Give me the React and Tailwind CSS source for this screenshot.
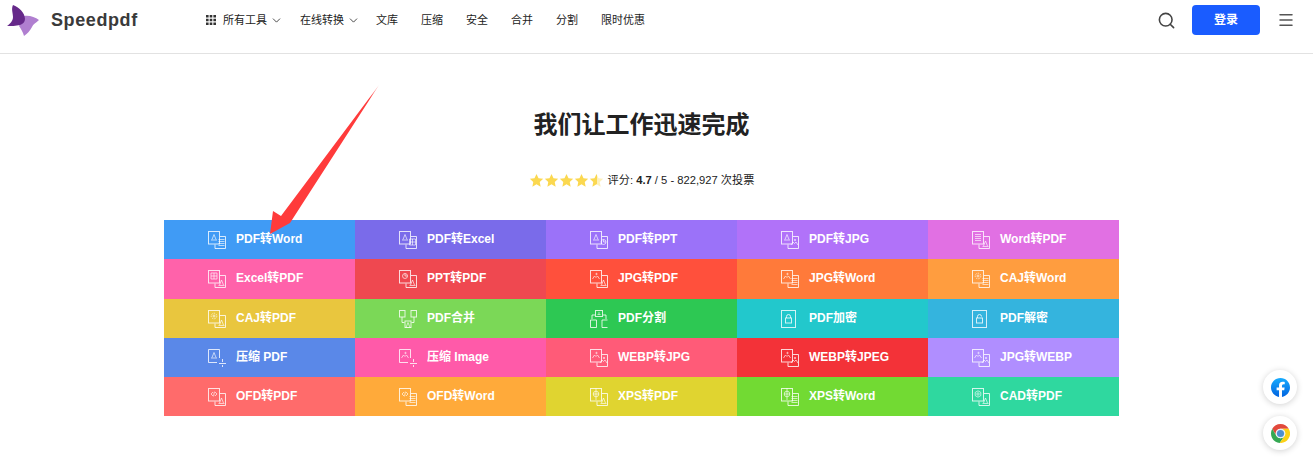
import { ChevronDown, Search, Menu } from 'lucide-react';

const FONT = "font-['Liberation_Sans','Noto_Sans_CJK_SC',sans-serif]";

const navLinks = [
  { label: '文库', w: 'w-[45px]' },
  { label: '压缩', w: 'w-[45px]' },
  { label: '安全', w: 'w-[45px]' },
  { label: '合并', w: 'w-[45px]' },
  { label: '分割', w: 'w-[45px]' },
  { label: '限时优惠', w: 'w-[44px]' },
];

const tools = [
  { label: 'PDF转Word', bg: 'bg-[#409bf5]', icon: ['pdf', 'word'] },
  { label: 'PDF转Excel', bg: 'bg-[#7a6bea]', icon: ['pdf', 'excel'] },
  { label: 'PDF转PPT', bg: 'bg-[#9b72f9]', icon: ['pdf', 'ppt'] },
  { label: 'PDF转JPG', bg: 'bg-[#b172f9]', icon: ['pdf', 'jpg'] },
  { label: 'Word转PDF', bg: 'bg-[#e170e3]', icon: ['word', 'pdf'] },
  { label: 'Excel转PDF', bg: 'bg-[#ff62aa]', icon: ['excel', 'pdf'] },
  { label: 'PPT转PDF', bg: 'bg-[#ef4850]', icon: ['ppt', 'pdf'] },
  { label: 'JPG转PDF', bg: 'bg-[#ff503c]', icon: ['jpg', 'pdf'] },
  { label: 'JPG转Word', bg: 'bg-[#ff7a3a]', icon: ['jpg', 'word'] },
  { label: 'CAJ转Word', bg: 'bg-[#ff9d3f]', icon: ['caj', 'word'] },
  { label: 'CAJ转PDF', bg: 'bg-[#e9c63e]', icon: ['caj', 'pdf'] },
  { label: 'PDF合并', bg: 'bg-[#7bd857]', special: 'merge' },
  { label: 'PDF分割', bg: 'bg-[#2dc853]', special: 'split' },
  { label: 'PDF加密', bg: 'bg-[#22c8cc]', special: 'lock' },
  { label: 'PDF解密', bg: 'bg-[#34b4de]', special: 'unlock' },
  { label: '压缩 PDF', bg: 'bg-[#5a88e8]', special: 'compress', glyph: 'pdf' },
  { label: '压缩 Image', bg: 'bg-[#ff5aa9]', special: 'compress', glyph: 'jpg' },
  { label: 'WEBP转JPG', bg: 'bg-[#ff5b78]', icon: ['jpg', 'jpg'] },
  { label: 'WEBP转JPEG', bg: 'bg-[#f33238]', icon: ['jpg', 'jpg'] },
  { label: 'JPG转WEBP', bg: 'bg-[#b08eff]', icon: ['jpg', 'jpg'] },
  { label: 'OFD转PDF', bg: 'bg-[#ff6b6b]', icon: ['ofd', 'pdf'] },
  { label: 'OFD转Word', bg: 'bg-[#ffaa3a]', icon: ['ofd', 'word'] },
  { label: 'XPS转PDF', bg: 'bg-[#e0d430]', icon: ['xps', 'pdf'] },
  { label: 'XPS转Word', bg: 'bg-[#72da33]', icon: ['xps', 'word'] },
  { label: 'CAD转PDF', bg: 'bg-[#2fd89f]', icon: ['cad', 'pdf'] },
];

// small marks drawn inside a 6x6 box
function Glyph({ kind, x, y }) {
  return (
    <g transform={`translate(${x} ${y})`} strokeWidth=".8">
      {kind === 'pdf' && <path d="M0 6h6M1 5.500 3 .5l2 5" />}
      {kind === 'word' && <path d="M0 .5h6M0 2.500h6M0 4.500h6M0 6.500h6" />}
      {kind === 'excel' && <path d="M0 0h6v6H0zM3 0v6M0 3h6" />}
      {kind === 'ppt' && (
        <>
          <circle cx="3" cy="3" r="2.500" />
          <path d="M3 3V.5M3 3h2.500" />
        </>
      )}
      {kind === 'jpg' && (
        <>
          <circle cx="3.500" cy="1" r=".7" />
          <path d="M-.5 6 1.500 3l1.500 1.500L4.500 3l2 3" />
        </>
      )}
      {kind === 'caj' && (
        <>
          <circle cx="3" cy="3" r="1" />
          <circle cx="3" cy="3" r="2.800" strokeDasharray="1.500 1" />
        </>
      )}
      {kind === 'ofd' && <path d="M2 1 0 3l2 2M4 1l2 2-2 2M3.400 .6 2.600 5.400" />}
      {kind === 'xps' && (
        <>
          <circle cx="3" cy="3" r="2.800" />
          <path d="M3 -3v12M0 3h6" />
        </>
      )}
      {kind === 'cad' && (
        <>
          <circle cx="3" cy="3" r="1.200" />
          <path d="M3-.2 5.800 1.400v3.200L3 6.200.2 4.600V1.400z" />
        </>
      )}
    </g>
  );
}

function ToolIcon({ tool }) {
  const { icon, special, glyph } = tool;
  return (
    <svg
      viewBox="0 0 18 18"
      className="w-[18px] h-[18px] shrink-0"
      fill="none"
      stroke="white"
      strokeOpacity=".8"
    >
      {icon && (
        <>
          <rect x=".5" y=".5" width="11" height="12.500" />
          <path d="M12 5.500h5.500v12H7v-4" />
          <Glyph kind={icon[0]} x={3} y={3} />
          <Glyph kind={icon[1]} x={10.5} y={icon[1] === 'pdf' ? 9.5 : 8} />
        </>
      )}
      {special === 'merge' && (
        <>
          <rect x=".5" y=".5" width="5.500" height="6.500" />
          <rect x="12" y=".5" width="5.500" height="6.500" />
          <rect x="6" y="11" width="6" height="6.500" />
          <path d="M3 7v5.500h2.500M15 7v5.500h-2.500" />
          <Glyph kind="pdf" x={6} y={12} />
        </>
      )}
      {special === 'split' && (
        <>
          <rect x="5.500" y=".5" width="7" height="6" />
          <path d="M2 9V5h3M16 9V5h-3M.5 10h6v7.500h-6zM12 10h5.500M12 10v7.500h5.500" />
          <path d="M7.500 4.500h3M9 2v2" strokeWidth=".8" />
        </>
      )}
      {(special === 'lock' || special === 'unlock') && (
        <>
          <rect x=".5" y=".5" width="14" height="17" />
          <rect x="4.500" y="8" width="6" height="5" />
          <path
            d={special === 'lock' ? 'M5.500 8V6.500a2 2 0 0 1 4 0V8' : 'M5.500 8V6.500a2 2 0 0 1 4 0'}
          />
        </>
      )}
      {special === 'compress' && (
        <>
          <path d="M11.500 9V.5H.5v13H9" />
          <Glyph kind={glyph} x={3} y={3} />
          <path d="M11 14.500h7M14.500 10v3M14.500 16v2" />
        </>
      )}
    </svg>
  );
}

function Logo() {
  return (
    <svg viewBox="0 0 32 31" className="w-[32px] h-[31px]">
      <path
        d="M17 11C22 10 28 12 32 15 29 18 26 19 25 22 23 26 20 29 17 31 16 27 14 24 12 21z"
        fill="#b07fd0"
      />
      <path
        d="M6 0C12 2 18 8 18 14 18 17 16 19 13 20 9 21 4 21 0 21 3 19 6 16 6 12 6 8 4 4 6 0z"
        fill="#66298a"
      />
    </svg>
  );
}

function GridIcon() {
  return (
    <svg viewBox="0 0 10 10" className="w-[10px] h-[10px] mr-[7px]" fill="#333">
      <path d="M0 0h2.600v2.600H0zM3.700 0h2.600v2.600H3.700zM7.400 0H10v2.600H7.400zM0 3.700h2.600v2.600H0zM3.700 3.700h2.600v2.600H3.700zM7.400 3.700H10v2.600H7.400zM0 7.400h2.600V10H0zM3.700 7.400h2.600V10H3.700zM7.400 7.400H10V10H7.400z" />
    </svg>
  );
}

function Star({ half }) {
  return (
    <svg viewBox="0 0 24 24" className="w-[15px] h-[15px]">
      {half && (
        <defs>
          <linearGradient id="halfStar">
            <stop offset="50%" stopColor="#fbd850" />
            <stop offset="50%" stopColor="#fdf0bb" />
          </linearGradient>
        </defs>
      )}
      <path
        d="M12 1.500l3.200 6.900 7.500.9-5.500 5.100 1.400 7.400L12 18.100 5.400 21.800l1.400-7.400L1.300 9.300l7.500-.9z"
        fill={half ? 'url(#halfStar)' : '#fbd850'}
      />
    </svg>
  );
}

function FacebookIcon() {
  return (
    <svg viewBox="0 0 24 24" className="w-[19px] h-[19px]">
      <defs>
        <linearGradient id="fbBlue" x1="0" y1="0" x2="0" y2="1">
          <stop offset="0%" stopColor="#18acfe" />
          <stop offset="100%" stopColor="#0163e0" />
        </linearGradient>
      </defs>
      <circle cx="12" cy="12" r="11" fill="white" />
      <path
        fill="url(#fbBlue)"
        d="M24 12.073c0-6.627-5.373-12-12-12s-12 5.373-12 12c0 5.990 4.388 10.954 10.125 11.854v-8.385H7.078v-3.470h3.047V9.430c0-3.007 1.792-4.669 4.533-4.669 1.312 0 2.686.235 2.686.235v2.953H15.830c-1.491 0-1.956.925-1.956 1.874v2.250h3.328l-.532 3.470h-2.796v8.385C19.612 23.027 24 18.062 24 12.073z"
      />
    </svg>
  );
}

function ChromeIcon() {
  return (
    <svg viewBox="0 0 48 48" className="w-[19px] h-[19px]">
      <path fill="#e2493c" d="M24 0a24 24 0 0 1 20.800 12H24a12 12 0 0 0-10.400 18L3.200 12A24 24 0 0 1 24 0z" />
      <path fill="#34a853" d="M3.200 12A24 24 0 0 0 22 47.900L34.400 30a12 12 0 0 1-20.800 0z" />
      <path fill="#fcd116" d="M44.800 12A24 24 0 0 1 22 47.900L34.400 30A12 12 0 0 0 24 12z" />
      <circle cx="24" cy="24" r="12" fill="#e8eef5" />
      <circle cx="24" cy="24" r="9" fill="#4d8fd0" />
    </svg>
  );
}

function Arrow() {
  return (
    <svg
      className="absolute left-0 top-0 pointer-events-none"
      width="1313"
      height="461"
      viewBox="0 0 1313 461"
    >
      <defs>
        <linearGradient id="arrowFade" x1="378" y1="86" x2="270" y2="234" gradientUnits="userSpaceOnUse">
          <stop offset="0%" stopColor="#ff3b3b" stopOpacity="0.4" />
          <stop offset="8%" stopColor="#ff3b3b" />
        </linearGradient>
      </defs>
      <path d="M379 85 290 223 270 234 273 211 281 216z" fill="url(#arrowFade)" />
    </svg>
  );
}

export default function App() {
  return (
    <div className={`relative w-[1313px] h-[461px] overflow-hidden bg-white ${FONT}`}>
      <header className="flex items-center h-[54px] pb-[13px] pl-[7px] pr-[18px] border-b border-[#e2e2e2] box-border">
        <Logo />
        <span className="ml-[12px] w-[155px] text-[18px] font-bold tracking-[.6px] text-[#3a3a3a]">
          Speedpdf
        </span>
        <nav className="flex items-center text-[11px] text-[#222]">
          <GridIcon />
          <span>所有工具</span>
          <ChevronDown size={13} strokeWidth={1.5} className="ml-[3px] mr-[17px] text-[#222]" />
          <span>在线转换</span>
          <ChevronDown size={13} strokeWidth={1.5} className="ml-[3px] mr-[16px] text-[#222]" />
          {navLinks.map((l) => (
            <span key={l.label} className={l.w}>
              {l.label}
            </span>
          ))}
        </nav>
        <div className="ml-auto flex items-center">
          <Search size={19} strokeWidth={2} className="text-[#444]" />
          <button className="ml-[16px] w-[68px] h-[30px] rounded-[4px] bg-[#1a5cff] text-white text-[12px] font-bold">
            登录
          </button>
          <Menu size={18} strokeWidth={2} className="ml-[17px] text-[#555]" />
        </div>
      </header>

      <main className="flex flex-col items-center w-[1283px]">
        <h1 className="mt-[53px] h-[36px] leading-[36px] text-[24px] font-bold text-[#222]">
          我们让工作迅速完成
        </h1>
        <div className="mt-[28px] h-[18px] flex items-center text-[11.2px] text-[#222]">
          <div className="flex">
            <Star />
            <Star />
            <Star />
            <Star />
            <Star half />
          </div>
          <span className="ml-[4px]">
            评分: <b className="font-semibold">4.7</b> / 5 - 822,927 次投票
          </span>
        </div>
        <div className="mt-[31px] w-[955px] grid grid-cols-5 grid-rows-[39px_40px_39px_39px_39px]">
          {tools.map((t) => (
            <div
              key={t.label}
              className={`flex items-center pl-[44px] text-[12px] font-bold text-white ${t.bg}`}
            >
              <ToolIcon tool={t} />
              <span className="ml-[10px] pb-[2px]">{t.label}</span>
            </div>
          ))}
        </div>
      </main>

      <Arrow />

      <a className="fixed left-[1263px] top-[370px] w-[34px] h-[34px] rounded-full bg-white shadow-[0_1px_6px_rgba(0,0,0,.18)] flex items-center justify-center">
        <FacebookIcon />
      </a>
      <a className="fixed left-[1263px] top-[416px] w-[34px] h-[34px] rounded-full bg-white shadow-[0_1px_6px_rgba(0,0,0,.18)] flex items-center justify-center">
        <ChromeIcon />
      </a>
    </div>
  );
}
